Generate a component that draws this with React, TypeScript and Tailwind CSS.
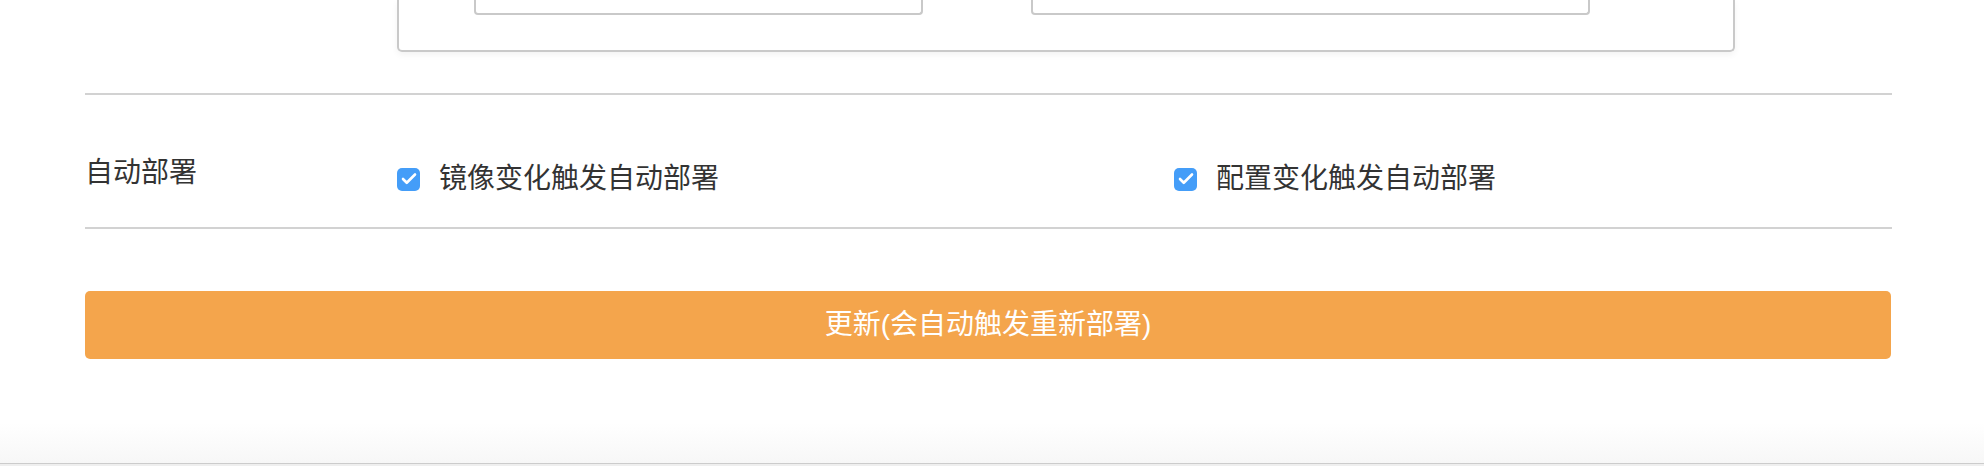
import { Check } from 'lucide-react'

const font = "font-['Helvetica_Neue','Liberation_Sans','Noto_Sans_CJK_SC',sans-serif]"

function CheckItem({ label }: { label: string }) {
  return (
    <label className="flex items-center gap-[19px] text-[28px] leading-[40px] text-[#333]">
      <span className="flex h-[23px] w-[23px] items-center justify-center rounded-[5px] bg-[#449df8]">
        <Check className="h-[18px] w-[18px] text-white" strokeWidth={3.5} />
      </span>
      <span>{label}</span>
    </label>
  )
}

export default function App() {
  return (
    <div className={`flex h-[466px] flex-col bg-white ${font}`}>
      <div className="ml-[85px] w-[1807px]">
        {/* tail of the form box scrolled off the top */}
        <div className="ml-[312px] flex h-[52px] w-[1338px] gap-[108px] rounded-b-[5px] border-2 border-t-0 border-[#c9c9c9] pl-[75px] shadow-[0_3px_6px_rgba(0,0,0,0.05)]">
          <div className="h-[15px] w-[449px] rounded-b-[4px] border-2 border-t-0 border-[#c9c9c9]" />
          <div className="h-[15px] w-[559px] rounded-b-[4px] border-2 border-t-0 border-[#c9c9c9]" />
        </div>

        <div className="mt-[41px] h-[2px] bg-[#d2d2d2]" />

        <div className="flex h-[132px] items-start">
          <div className="w-[312px] pt-[58px] text-[28px] leading-[40px] text-[#333]">自动部署</div>
          <div className="flex items-start pt-[64px]">
            <div className="w-[777px]">
              <CheckItem label="镜像变化触发自动部署" />
            </div>
            <CheckItem label="配置变化触发自动部署" />
          </div>
        </div>

        <div className="h-[2px] bg-[#d2d2d2]" />

        <button className="mt-[62px] flex h-[68px] w-[1806px] items-center justify-center rounded-[5px] bg-[#f4a54c] text-[28px] text-white">
          更新(会自动触发重新部署)
        </button>
      </div>

      <div className="flex-1" />
      <div className="h-[40px] bg-gradient-to-b from-white to-[#f7f7f7]" />
      <div className="h-[1px] bg-[#cccccc]" />
      <div className="h-[2px] bg-[#efefef]" />
    </div>
  )
}
